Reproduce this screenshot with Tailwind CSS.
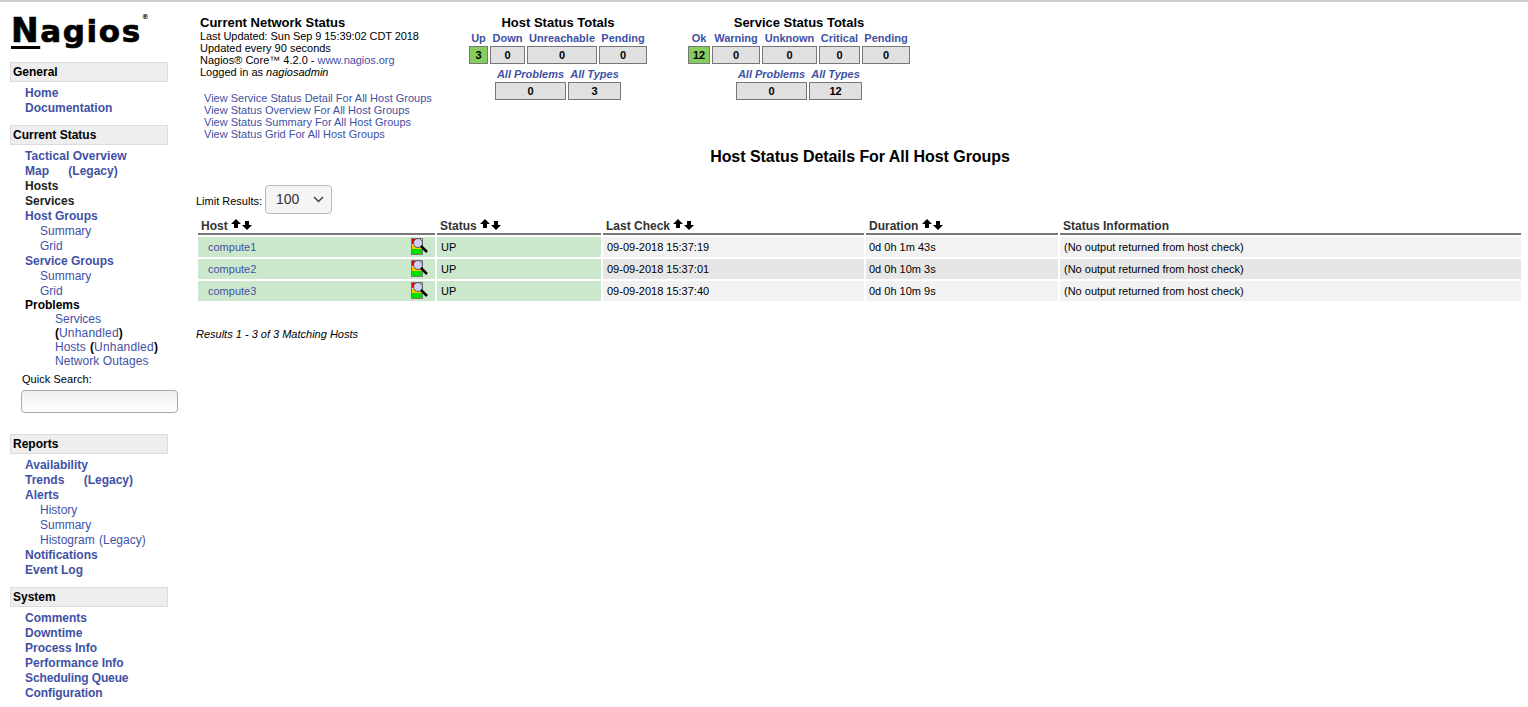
<!DOCTYPE html>
<html lang="en">
<head>
  <meta charset="UTF-8">
  <title>Nagios Core - Host Status Details</title>
  <script src="https://cdn.jsdelivr.net/npm/@tailwindcss/browser@4"></script>
</head>
<body class="bg-white h-[707px] overflow-hidden font-['Liberation_Sans',Arial,sans-serif] text-black border-t-2 border-[#cccccc]">
  <div class="flex">
    <!-- side nav -->
    <nav class="w-[196px] shrink-0 text-[12px] leading-[15px] text-[#3f51a5]">
      <div class="pl-[11px] pt-[11px] h-[60px] font-['DejaVu_Sans',sans-serif] font-bold text-[31px] leading-[36px] tracking-[1.6px] text-black [-webkit-text-stroke:0.7px_black]">
        <span class="underline decoration-[3px] underline-offset-[4px] text-[33px]">N</span>agios<sup class="text-[7px] tracking-normal align-top relative top-[4px] [-webkit-text-stroke:0]">®</sup>
      </div>

      <div class="ml-[10px] w-[158px] h-[20px] bg-[#eeeeee] border border-[#dddddd] pl-[2px] font-bold text-black leading-[18px]">General</div>
      <ul class="mt-[4px] pl-[25px] font-bold">
        <li>Home</li>
        <li>Documentation</li>
      </ul>

      <div class="mt-[9px] ml-[10px] w-[158px] h-[20px] bg-[#eeeeee] border border-[#dddddd] pl-[2px] font-bold text-black leading-[18px]">Current Status</div>
      <ul class="mt-[4px] pl-[25px] font-bold">
        <li class="tracking-[0.06px]">Tactical Overview</li>
        <li>Map <span class="ml-[16px]">(Legacy)</span></li>
        <li class="text-[#222222]">Hosts</li>
        <li class="text-[#222222]">Services</li>
        <li>Host Groups</li>
        <li class="pl-[15px] font-normal">Summary</li>
        <li class="pl-[15px] font-normal">Grid</li>
        <li>Service Groups</li>
        <li class="pl-[15px] font-normal">Summary</li>
        <li class="pl-[15px] font-normal">Grid</li>
        <li class="text-black h-[13px] leading-[13px]">Problems</li>
      </ul>
      <ul class="pl-[55px] font-normal leading-[14px]">
        <li>Services</li>
        <li><b class="text-black">(</b><span class="tracking-[0.2px]">Unhandled</span><b class="text-black">)</b></li>
        <li>Hosts <b class="text-black ml-[1px]">(</b><span class="tracking-[0.2px]">Unhandled</span><b class="text-black">)</b></li>
        <li class="tracking-[0.06px]">Network Outages</li>
      </ul>
      <div class="mt-[4px] pl-[22px] text-[11px] leading-[14px] text-black tracking-[0.05px]">Quick Search:</div>
      <input type="text" class="block mt-[4px] ml-[21px] w-[157px] h-[23px] rounded-[4px] border border-[#aaaaaa] bg-gradient-to-b from-[#f0f0f0] to-white">

      <div class="mt-[21px] ml-[10px] w-[158px] h-[20px] bg-[#eeeeee] border border-[#dddddd] pl-[2px] font-bold text-black leading-[18px]">Reports</div>
      <ul class="mt-[4px] pl-[25px] font-bold">
        <li>Availability</li>
        <li>Trends <span class="ml-[16px]">(Legacy)</span></li>
        <li>Alerts</li>
        <li class="pl-[15px] font-normal">History</li>
        <li class="pl-[15px] font-normal">Summary</li>
        <li class="pl-[15px] font-normal">Histogram <span class="ml-[1px]">(Legacy)</span></li>
        <li>Notifications</li>
        <li>Event Log</li>
      </ul>

      <div class="mt-[9px] ml-[10px] w-[158px] h-[20px] bg-[#eeeeee] border border-[#dddddd] pl-[2px] font-bold text-black leading-[18px]">System</div>
      <ul class="mt-[4px] pl-[25px] font-bold">
        <li>Comments</li>
        <li>Downtime</li>
        <li>Process Info</li>
        <li>Performance Info</li>
        <li class="tracking-[-0.12px]">Scheduling Queue</li>
        <li class="tracking-[-0.08px]">Configuration</li>
      </ul>
    </nav>

    <main class="flex-1 min-w-0 pr-[5px]">
      <!-- top summary -->
      <div class="flex h-[146px] pt-[13px]">
        <div class="w-[273px] pl-[4px] text-[11px] leading-[12px]">
          <div class="font-bold text-[13px] leading-[15px]">Current Network Status</div>
          <div class="tracking-[-0.07px]">Last Updated: Sun Sep 9 15:39:02 CDT 2018</div>
          <div>Updated every 90 seconds</div>
          <div>Nagios® Core™ 4.2.0 - <span class="text-[#3f51a5] tracking-[-0.05px]">www.nagios.org</span></div>
          <div>Logged in as <i>nagiosadmin</i></div>
          <div class="mt-[14px] pl-[4px] text-[#3f51a5]">
            <div>View Service Status Detail For All Host Groups</div>
            <div>View Status Overview For All Host Groups</div>
            <div>View Status Summary For All Host Groups</div>
            <div>View Status Grid For All Host Groups</div>
          </div>
        </div>

        <!-- host totals -->
        <div class="w-[178px] flex flex-col items-center shrink-0">
          <div class="font-bold text-[13px] leading-[15px]">Host Status Totals</div>
          <div class="mt-[1px] flex gap-[2px] text-center text-[11px] font-bold">
            <div class="w-[19px]"><div class="h-[15px] leading-[14px] text-[#3f51a5]">Up</div><div class="h-[18px] leading-[16px] bg-[#86cd5e] border border-[#777777] text-black">3</div></div>
            <div class="w-[35px]"><div class="h-[15px] leading-[14px] text-[#3f51a5]">Down</div><div class="h-[18px] leading-[16px] bg-[#e0e0e0] border border-[#777777] text-black">0</div></div>
            <div class="w-[70px]"><div class="h-[15px] leading-[14px] text-[#3f51a5]">Unreachable</div><div class="h-[18px] leading-[16px] bg-[#e0e0e0] border border-[#777777] text-black">0</div></div>
            <div class="w-[48px]"><div class="h-[15px] leading-[14px] text-[#3f51a5]">Pending</div><div class="h-[18px] leading-[16px] bg-[#e0e0e0] border border-[#777777] text-black">0</div></div>
          </div>
          <div class="mt-[3px] flex gap-[2px] text-center text-[11px] font-bold">
            <div class="w-[71px]"><div class="h-[15px] leading-[15px] italic text-[#3f51a5]">All Problems</div><div class="h-[18px] leading-[16px] bg-[#e0e0e0] border border-[#777777] text-black">0</div></div>
            <div class="w-[53px]"><div class="h-[15px] leading-[15px] italic text-[#3f51a5]">All Types</div><div class="h-[18px] leading-[16px] bg-[#e0e0e0] border border-[#777777] text-black">3</div></div>
          </div>
        </div>

        <!-- service totals -->
        <div class="ml-[41px] w-[222px] flex flex-col items-center shrink-0">
          <div class="font-bold text-[13px] leading-[15px]">Service Status Totals</div>
          <div class="mt-[1px] flex gap-[2px] text-center text-[11px] font-bold">
            <div class="w-[22px]"><div class="h-[15px] leading-[14px] text-[#3f51a5]">Ok</div><div class="h-[18px] leading-[16px] bg-[#86cd5e] border border-[#777777] text-black">12</div></div>
            <div class="w-[48px]"><div class="h-[15px] leading-[14px] text-[#3f51a5]">Warning</div><div class="h-[18px] leading-[16px] bg-[#e0e0e0] border border-[#777777] text-black">0</div></div>
            <div class="w-[55px]"><div class="h-[15px] leading-[14px] text-[#3f51a5]">Unknown</div><div class="h-[18px] leading-[16px] bg-[#e0e0e0] border border-[#777777] text-black">0</div></div>
            <div class="w-[41px]"><div class="h-[15px] leading-[14px] text-[#3f51a5]">Critical</div><div class="h-[18px] leading-[16px] bg-[#e0e0e0] border border-[#777777] text-black">0</div></div>
            <div class="w-[48px]"><div class="h-[15px] leading-[14px] text-[#3f51a5]">Pending</div><div class="h-[18px] leading-[16px] bg-[#e0e0e0] border border-[#777777] text-black">0</div></div>
          </div>
          <div class="mt-[3px] flex gap-[2px] text-center text-[11px] font-bold">
            <div class="w-[71px]"><div class="h-[15px] leading-[15px] italic text-[#3f51a5]">All Problems</div><div class="h-[18px] leading-[16px] bg-[#e0e0e0] border border-[#777777] text-black">0</div></div>
            <div class="w-[53px]"><div class="h-[15px] leading-[15px] italic text-[#3f51a5]">All Types</div><div class="h-[18px] leading-[16px] bg-[#e0e0e0] border border-[#777777] text-black">12</div></div>
          </div>
        </div>
      </div>

      <h1 class="w-[1328px] text-center font-bold text-[16px] leading-[18px] tracking-[-0.05px]">Host Status Details For All Host Groups</h1>

      <div class="mt-[19px] flex items-center h-[29px] text-[11px]">
        <span class="mt-[3px]">Limit Results:</span>
        <div class="ml-[3px] w-[67px] h-[29px] rounded-[4px] border border-[#bbbbbb] bg-[#f5f5f5] flex items-center pl-[10px] text-[#333333] text-[14px]">
          100
          <svg class="ml-[14px]" width="11" height="7" viewBox="0 0 11 7"><path d="M1 1l4.500 4.500L10 1" fill="none" stroke="#444444" stroke-width="1.500"/></svg>
        </div>
      </div>

      <table class="mt-[3px] w-[1327px] table-fixed border-separate border-spacing-x-[2px] border-spacing-y-[2px] text-[11px] text-left">
        <colgroup>
          <col class="w-[237px]"><col class="w-[164px]"><col class="w-[261px]"><col class="w-[192px]"><col>
        </colgroup>
        <thead>
          <tr class="text-[12px] text-[#333333]">
            <th class="h-[16px] px-[3px] font-bold border-b-2 border-[#777777] leading-[13px]">Host <svg class="inline-block align-top -mt-[1px]" width="22" height="12" viewBox="0 0 22 12"><path d="M5 0l5 5H7v4H3V5H0zM16 11l-5-5h3V2h4v4h3z" fill="#000000"/></svg></th>
            <th class="px-[3px] font-bold border-b-2 border-[#777777] leading-[13px]">Status <svg class="inline-block align-top -mt-[1px]" width="22" height="12" viewBox="0 0 22 12"><path d="M5 0l5 5H7v4H3V5H0zM16 11l-5-5h3V2h4v4h3z" fill="#000000"/></svg></th>
            <th class="px-[3px] font-bold border-b-2 border-[#777777] leading-[13px]">Last Check <svg class="inline-block align-top -mt-[1px]" width="22" height="12" viewBox="0 0 22 12"><path d="M5 0l5 5H7v4H3V5H0zM16 11l-5-5h3V2h4v4h3z" fill="#000000"/></svg></th>
            <th class="px-[3px] font-bold border-b-2 border-[#777777] leading-[13px]">Duration <svg class="inline-block align-top -mt-[1px]" width="22" height="12" viewBox="0 0 22 12"><path d="M5 0l5 5H7v4H3V5H0zM16 11l-5-5h3V2h4v4h3z" fill="#000000"/></svg></th>
            <th class="px-[3px] font-bold border-b-2 border-[#777777] leading-[13px]">Status Information</th>
          </tr>
        </thead>
        <tbody>
          <tr class="h-[20px] bg-[#f2f2f2]">
            <td class="bg-[#cce8cc] pl-[10px] pr-[7px] text-[#3f51a5]"><div class="flex items-center justify-between"><span>compute1</span><svg class="-mt-[2px]" width="18" height="17" viewBox="0 0 18 17"><rect x="1.500" y="0.500" width="11" height="16" fill="#eeeeee" stroke="#777777"/><rect x="2" y="1" width="3" height="5" fill="#e00000"/><rect x="2" y="7" width="10" height="4" fill="#f6c800"/><rect x="2" y="11" width="10" height="5" fill="#00e000"/><circle cx="8" cy="5" r="4.500" fill="#d0d0f5" stroke="#555555"/><path d="M11 8l6 6" stroke="#000000" stroke-width="2.500"/></svg></div></td>
            <td class="bg-[#cce8cc] pl-[4px] pr-[3px] text-black">UP</td>
            <td class="pl-[4px] pr-[3px]">09-09-2018 15:37:19</td>
            <td class="px-[3px]">0d 0h 1m 43s</td>
            <td class="pl-[4px] pr-[3px]">(No output returned from host check)</td>
          </tr>
          <tr class="h-[20px] bg-[#e6e6e6]">
            <td class="bg-[#cce8cc] pl-[10px] pr-[7px] text-[#3f51a5]"><div class="flex items-center justify-between"><span>compute2</span><svg class="-mt-[2px]" width="18" height="17" viewBox="0 0 18 17"><rect x="1.500" y="0.500" width="11" height="16" fill="#eeeeee" stroke="#777777"/><rect x="2" y="1" width="3" height="5" fill="#e00000"/><rect x="2" y="7" width="10" height="4" fill="#f6c800"/><rect x="2" y="11" width="10" height="5" fill="#00e000"/><circle cx="8" cy="5" r="4.500" fill="#d0d0f5" stroke="#555555"/><path d="M11 8l6 6" stroke="#000000" stroke-width="2.500"/></svg></div></td>
            <td class="bg-[#cce8cc] pl-[4px] pr-[3px] text-black">UP</td>
            <td class="pl-[4px] pr-[3px]">09-09-2018 15:37:01</td>
            <td class="px-[3px]">0d 0h 10m 3s</td>
            <td class="pl-[4px] pr-[3px]">(No output returned from host check)</td>
          </tr>
          <tr class="h-[20px] bg-[#f2f2f2]">
            <td class="bg-[#cce8cc] pl-[10px] pr-[7px] text-[#3f51a5]"><div class="flex items-center justify-between"><span>compute3</span><svg class="-mt-[2px]" width="18" height="17" viewBox="0 0 18 17"><rect x="1.500" y="0.500" width="11" height="16" fill="#eeeeee" stroke="#777777"/><rect x="2" y="1" width="3" height="5" fill="#e00000"/><rect x="2" y="7" width="10" height="4" fill="#f6c800"/><rect x="2" y="11" width="10" height="5" fill="#00e000"/><circle cx="8" cy="5" r="4.500" fill="#d0d0f5" stroke="#555555"/><path d="M11 8l6 6" stroke="#000000" stroke-width="2.500"/></svg></div></td>
            <td class="bg-[#cce8cc] pl-[4px] pr-[3px] text-black">UP</td>
            <td class="pl-[4px] pr-[3px]">09-09-2018 15:37:40</td>
            <td class="px-[3px]">0d 0h 10m 9s</td>
            <td class="pl-[4px] pr-[3px]">(No output returned from host check)</td>
          </tr>
        </tbody>
      </table>

      <div class="mt-[25px] text-[11px] leading-[13px] italic">Results 1 - 3 of 3 Matching Hosts</div>
    </main>
  </div>
</body>
</html>
